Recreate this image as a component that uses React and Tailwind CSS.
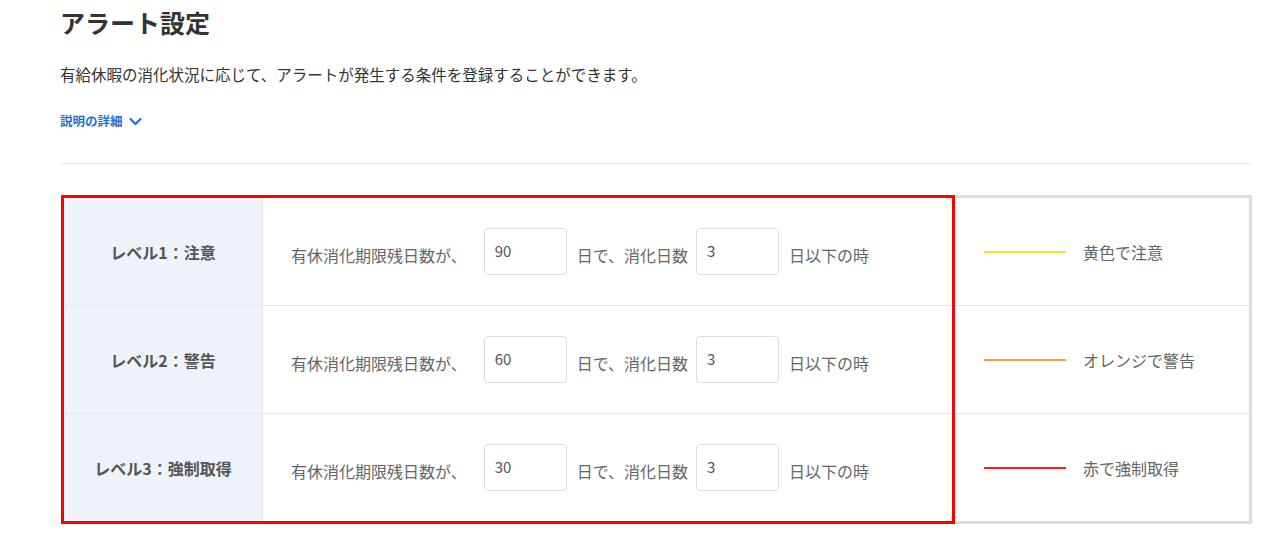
import React from 'react';

const rows = [
    { label: 'レベル1：注意', days: '90', used: '3', color: 'bg-[#ffdf2b]', note: '黄色で注意' },
    { label: 'レベル2：警告', days: '60', used: '3', color: 'bg-[#f5a233]', note: 'オレンジで警告' },
    { label: 'レベル3：強制取得', days: '30', used: '3', color: 'bg-[#ff1a1a]', note: '赤で強制取得' },
];

function NumberBox({ value }) {
    return (
        <input
            type="text"
            defaultValue={value}
            className="w-[83px] h-[47px] rounded-[4px] border-[1.5px] border-[#dcdcdc] bg-white pl-[10px] pb-[3px] text-[15px] text-[#555] outline-none"
        />
    );
}

export default function App() {
    return (
        <div
            className="min-h-screen bg-white pl-[60px] pr-[28px] pt-[6px] text-[#333]"
            style={{ fontFamily: '"Noto Sans CJK JP", "Noto Sans", sans-serif' }}
        >
            <h1 className="text-[25px] leading-[32px] font-bold text-[#333]">アラート設定</h1>

            <p className="mt-[24px] text-[15.5px] leading-[24px] text-[#333]">
                有給休暇の消化状況に応じて、アラートが発生する条件を登録することができます。
            </p>

            <button className="mt-[26px] flex items-center gap-[5px] text-[12.5px] leading-[18px] font-bold text-[#1f6fd1]">
                説明の詳細
                <svg width="15" height="15" viewBox="0 0 24 24" fill="none" stroke="currentColor" strokeWidth="3.4" strokeLinecap="round" strokeLinejoin="round">
                    <path d="M4 8l8 8 8-8" />
                </svg>
            </button>

            <div className="mt-[33px] h-px bg-[#ececec]" />

            {/* Alert level table */}
            <div className="relative mt-[31px] ml-px w-[1191px] border-[3px] border-[#dcdde0]">
                {rows.map((row, i) => (
                    <div
                        key={row.label}
                        className={`grid grid-cols-[199px_690px_1fr] ${i < 2 ? 'h-[108px] border-b border-[#e6e6e6]' : 'h-[107px]'}`}
                    >
                        <div className="flex items-center justify-center bg-[#eef3fb] border-r border-[#e3e6ea] text-[16px] font-bold text-[#555]">
                            {row.label}
                        </div>
                        <div className="flex items-center pl-[28px] text-[16px] text-[#666]">
                            <span className="pt-[6px] mr-[17px]">有休消化期限残日数が、</span>
                            <NumberBox value={row.days} />
                            <span className="pt-[6px] ml-[10px] mr-[8px]">日で、消化日数</span>
                            <NumberBox value={row.used} />
                            <span className="pt-[6px] ml-[10px]">日以下の時</span>
                        </div>
                        <div className="flex items-center pl-[30px] border-l border-[#e6e6e6] text-[16px] text-[#666]">
                            <div className={`w-[82px] h-[2px] ${row.color}`} />
                            <span className="ml-[17px]">{row.note}</span>
                        </div>
                    </div>
                ))}

                {/* annotation box */}
                <div className="pointer-events-none absolute left-[-3px] top-[-3px] bottom-[-3px] w-[894px] border-[3px] border-[#ff0000]" />
            </div>
        </div>
    );
}
